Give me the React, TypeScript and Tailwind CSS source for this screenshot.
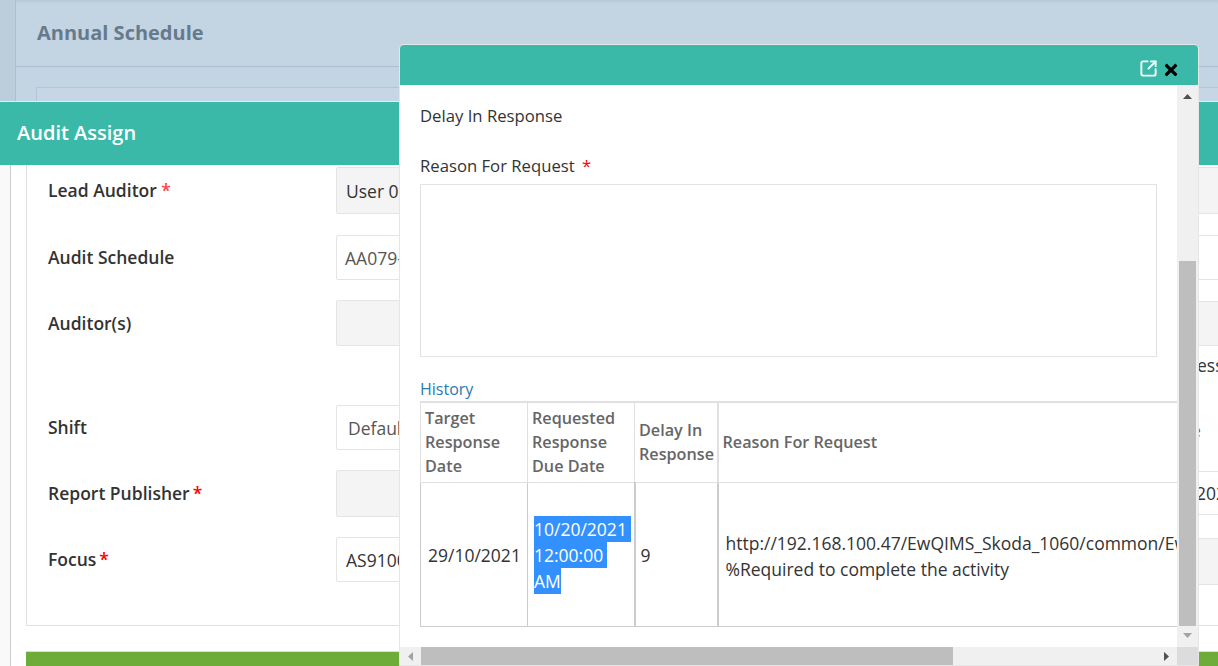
import { SquareArrowOutUpRight } from 'lucide-react'
import { FaTimes } from 'react-icons/fa'

const font = { fontFamily: '"Open Sans", sans-serif' }

function Star({ className = '' }: { className?: string }) {
  return <span className={`text-[#f00] ${className}`}>*</span>
}

function Field({ grey, className = '', children }: { grey?: boolean; className?: string; children?: React.ReactNode }) {
  return (
    <div className={`flex items-center border border-[#e4e4e4] rounded-[2px] whitespace-nowrap ${grey ? 'bg-[#f4f4f4]' : 'bg-white'} ${className}`}>
      {children}
    </div>
  )
}

function FormRow({ label, className = '', children }: { label: React.ReactNode; className?: string; children: React.ReactNode }) {
  return (
    <div className={`flex items-center ${className}`}>
      <div className="w-[309px] pl-[21px] pb-[2px] text-[17.5px] font-semibold text-[#333]">{label}</div>
      {children}
    </div>
  )
}

function LeftColumn() {
  return (
    <div className="w-[730px] pt-[2px] shrink-0 text-[17.5px] text-[#333]">
      <FormRow label={<>Lead Auditor <Star className="text-[#f44]" /></>}>
        <Field grey className="w-[380px] h-[47px] pl-[9px]">User 01</Field>
      </FormRow>
      <FormRow label="Audit Schedule" className="mt-[21px]">
        <Field className="w-[380px] h-[45px] pl-[8px] text-[#555]">AA079-01</Field>
      </FormRow>
      <FormRow label={<span className="block pt-[2px]">Auditor(s)</span>} className="mt-[20px]">
        <Field grey className="w-[380px] h-[46px]" />
      </FormRow>
      <FormRow label="Shift" className="mt-[59px]">
        <Field className="w-[380px] h-[45px] pl-[11px] text-[#555]">Default</Field>
      </FormRow>
      <FormRow label={<>Report Publisher<Star className="ml-[3px]" /></>} className="mt-[20px]">
        <Field grey className="w-[380px] h-[47px]" />
      </FormRow>
      <FormRow label={<>Focus<Star className="ml-[3px]" /></>} className="mt-[20px]">
        <Field className="w-[380px] h-[45px] pl-[9px]">AS9100</Field>
      </FormRow>
    </div>
  )
}

function RightColumn() {
  return (
    <div className="flex-1 pt-[2px] overflow-hidden text-[17.5px]">
      <Field grey className="w-[600px] h-[47px]" />
      <Field className="w-[600px] h-[45px] mt-[21px]" />
      <Field grey className="w-[600px] h-[45px] mt-[21px]" />
      <div className="mt-[7px] h-[24px] leading-[24px] pl-[440px] text-[#333]">ess</div>
      <div className="mt-[41px] h-[24px] leading-[24px] pl-[434px] text-[#2a7ab0]">e</div>
      <Field className="w-[600px] h-[44px] mt-[29px] pl-[438px] text-[#333]">2021</Field>
      <Field grey className="w-[600px] h-[47px] mt-[23px]" />
    </div>
  )
}

function HistoryTable() {
  const head = 'border border-[#e0e0e0] px-[4px] text-left text-[16.2px] font-semibold text-[#666] align-middle leading-[24px]'
  const cell = 'border border-[#ccc] align-middle text-[17.5px] leading-[26px] text-[#333]'
  return (
    <table className="table-fixed border-collapse w-[1040px]">
      <colgroup>
        <col className="w-[107px]" />
        <col className="w-[107px]" />
        <col className="w-[83px]" />
        <col />
      </colgroup>
      <thead>
        <tr className="h-[80px]">
          <th className={`${head} border-t-2`}>Target Response Date</th>
          <th className={`${head} border-t-2`}>Requested Response Due Date</th>
          <th className={`${head} border-t-2 border-r-2`}>Delay In Response</th>
          <th className={`${head} border-t-2`}>Reason For Request</th>
        </tr>
      </thead>
      <tbody>
        <tr className="h-[144px]">
          <td className={`${cell} px-[7px] pt-[2px]`}>29/10/2021</td>
          <td className={`${cell} px-[6px] pt-[2px] border-r-2`}>
            <span className="block w-fit pr-[4px] bg-[#3390ff] text-white">10/20/2021</span>
            <span className="block w-fit pr-[4px] bg-[#3390ff] text-white">12:00:00</span>
            <span className="block w-fit bg-[#3390ff] text-white">AM</span>
          </td>
          <td className={`${cell} px-[5px] pt-[2px] border-r-2`}>9</td>
          <td className={`${cell} px-[7px] pt-[4px] whitespace-nowrap`}>
            http://192.168.100.47/EwQIMS_Skoda_1060/common/EwQIMS
            <br />
            %Required to complete the activity
          </td>
        </tr>
      </tbody>
    </table>
  )
}

function Arrow({ dir, dark }: { dir: 'up' | 'down' | 'left' | 'right'; dark?: boolean }) {
  const pts = { up: '0,5 9,5 4.5,0', down: '0,0 9,0 4.5,5', left: '5,0 5,9 0,4.5', right: '0,0 0,9 5,4.5' }[dir]
  return (
    <svg width={dir === 'up' || dir === 'down' ? 9 : 5} height={dir === 'up' || dir === 'down' ? 5 : 9}>
      <polygon points={pts} fill={dark ? '#505050' : '#a3a3a3'} />
    </svg>
  )
}

function Modal() {
  return (
    <div className="absolute left-[399px] top-[44px] w-[800px] h-[622px] flex flex-col bg-white border border-[#e6e6e6] rounded-t-[5px] overflow-hidden">
      <div className="h-[40px] shrink-0 bg-[#3ab9a9] flex items-end justify-end gap-[4px] pb-[6px] pr-[18px]">
        <SquareArrowOutUpRight size={19} color="#fff" strokeWidth={2.4} className="mb-[1px]" />
        <FaTimes size={18} color="#000" />
      </div>
      <div className="flex flex-1 min-h-0">
        <div className="w-[777px] overflow-hidden flex flex-col">
          <div className="flex-1 overflow-hidden pl-[20px] pt-[19px]">
            <div className="text-[16.7px] font-medium text-[#333]">Delay In Response</div>
            <div className="mt-[26px] text-[16.7px] font-medium text-[#333]">
              Reason For Request <Star className="ml-[3px]" />
            </div>
            <textarea
              aria-label="Reason For Request"
              className="block mt-[6px] w-[737px] h-[173px] border border-[#e2e2e2] outline-none resize-none"
            />
            <div className="mt-[20px] text-[16px] text-[#2a7ab0]">History</div>
            <HistoryTable />
          </div>
          <div className="h-[18px] shrink-0 bg-[#f0f0f0] flex items-center">
            <div className="w-[21px] flex justify-center"><Arrow dir="left" /></div>
            <div className="w-[532px] h-full bg-[#bebebe]" />
            <div className="flex-1 flex justify-end pr-[8px]"><Arrow dir="right" dark /></div>
          </div>
        </div>
        <div className="w-[21px] shrink-0 flex flex-col bg-[#f0f0f0]">
          <div className="h-[176px] pt-[9px] flex justify-center items-start"><Arrow dir="up" dark /></div>
          <div className="h-[365px] w-[17px] ml-[2px] bg-[#bebebe]" />
          <div className="flex-1 flex justify-center pt-[7px]"><Arrow dir="down" /></div>
          <div className="h-[18px] shrink-0 bg-[#dcdcdc]" />
        </div>
      </div>
    </div>
  )
}

export default function App() {
  return (
    <div className="relative w-[1218px] h-[666px] overflow-hidden bg-white text-[16.5px] leading-[24px]" style={font}>
      {/* dimmed page behind */}
      <div className="h-[101px] bg-[#c3d4e3] flex overflow-hidden">
        <div className="w-[16px] shrink-0 bg-[#bccddc] border-r border-[#adbfcf]" />
        <div className="flex-1">
          <div className="h-[67px] border-b border-[#adbfcf] pl-[21px] pt-[21px] text-[20px] font-bold text-[#677a8c] bg-gradient-to-b from-[#b6c7d6] to-[#c3d4e3] to-[4px]">
            Annual Schedule
          </div>
          <div className="ml-[20px] mt-[20px] h-[40px] bg-[#c6d6e5] border-t border-l border-[#b4c6d6]" />
        </div>
      </div>

      <div className="h-[64px] border-t border-[#e4ecf0] bg-[#3ab9a9] flex items-center pl-[17px] pb-[2px] text-[20px] font-semibold text-white">
        Audit Assign
      </div>

      <div className="flex">
        <div className="w-[10px] shrink-0 bg-[#f9f9f9] border-r-[1px] border-[#ccc] box-content" />
        <div className="flex-1 pl-[15px]">
          <div className="flex h-[461px] border-l border-b border-[#e0e0e0]">
            <LeftColumn />
            <RightColumn />
          </div>
          <div className="mt-[25px] flex h-[20px] border-t border-[#ddd]">
            <div className="flex-1 bg-[#6eac3a]" />
            <div className="w-[100px] bg-[#d0c457]" />
          </div>
        </div>
      </div>

      <Modal />
    </div>
  )
}
